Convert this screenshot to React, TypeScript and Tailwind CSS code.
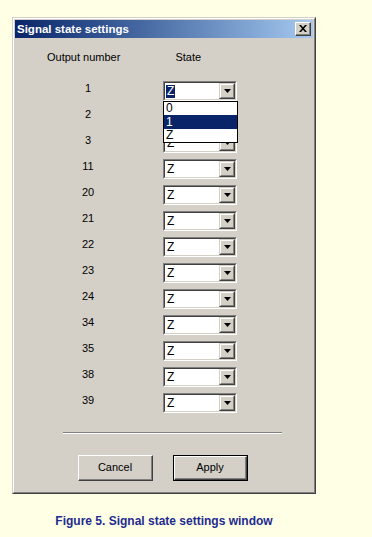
import React from "react";

const rows = ["1", "2", "3", "11", "20", "21", "22", "23", "24", "34", "35", "38", "39"];

function Arrow() {
  return (
    <svg width="7" height="4" viewBox="0 0 7 4">
      <path d="M0 0H7L3.5 4Z" fill="#000" />
    </svg>
  );
}

function Combo({ selected }: { selected?: boolean }) {
  return (
    <div className="w-[74px] h-[20px] border-t border-l border-t-[#808080] border-l-[#808080] border-b border-r border-b-white border-r-white">
      <div className="w-full h-full border-t border-l border-t-[#404040] border-l-[#404040] border-b border-r border-b-[#d4d0c8] border-r-[#d4d0c8] bg-white flex items-stretch">
        <div className="flex-1 flex items-center pl-[1px]">
          <span
            className={
              selected
                ? "bg-[#0a246a] text-white px-[1px] leading-[13px] text-[12px]"
                : "text-black px-[1px] leading-[13px] text-[12px]"
            }
          >
            Z
          </span>
        </div>
        <div className="w-[16px] border-t border-l border-t-[#d4d0c8] border-l-[#d4d0c8] border-b border-r border-b-[#404040] border-r-[#404040]">
          <div className="w-full h-full border-t border-l border-t-white border-l-white border-b border-r border-b-[#808080] border-r-[#808080] bg-[#d4d0c8] flex items-center justify-center">
            <Arrow />
          </div>
        </div>
      </div>
    </div>
  );
}

function Button({ label, isDefault }: { label: string; isDefault?: boolean }) {
  const inner = (
    <div className="w-full h-full border-t border-l border-t-white border-l-white border-b border-r border-b-[#404040] border-r-[#404040]">
      <div className="w-full h-full border-b border-r border-b-[#808080] border-r-[#808080] bg-[#d4d0c8] flex items-center justify-center text-[11px] text-black">
        {label}
      </div>
    </div>
  );
  return (
    <div className={isDefault ? "w-[75px] h-[26px] border border-black" : "w-[75px] h-[26px]"}>
      {inner}
    </div>
  );
}

export default function App() {
  return (
    <div
      className="w-[372px] h-[537px] bg-[#ffffe6] pt-[17px] pl-[12px]"
      style={{ fontFamily: '"Liberation Sans", Arial, sans-serif' }}
    >
      <div className="w-[304px]">
        <div className="w-[304px] h-[477px] border-t border-l border-t-[#d4d0c8] border-l-[#d4d0c8] border-b border-r border-b-[#404040] border-r-[#404040]">
          <div className="w-full h-full border-t border-l border-t-white border-l-white border-b border-r border-b-[#808080] border-r-[#808080] bg-[#d4d0c8] p-[1px] flex flex-col">
            {/* Title bar */}
            <div className="h-[18px] bg-gradient-to-r from-[#0a246a] to-[#a6caf0] flex items-center justify-between pl-[2px] pr-[2px]">
              <span className="text-white font-bold text-[11.5px] leading-[14px]">Signal state settings</span>
              <div className="w-[16px] h-[14px] border-t border-l border-t-white border-l-white border-b border-r border-b-[#404040] border-r-[#404040]">
                <div className="w-full h-full border-b border-r border-b-[#808080] border-r-[#808080] bg-[#d4d0c8] flex items-center justify-center">
                  <svg width="8" height="7" viewBox="0 0 8 7">
                    <path d="M0 0h2l2 2.3L6 0h2L5 3.5 8 7H6L4 4.7 2 7H0l3-3.5Z" fill="#000" />
                  </svg>
                </div>
              </div>
            </div>
            {/* Body */}
            <div className="relative flex-1 text-[11px] text-black">
              <div className="flex pt-[12px] h-[40px] leading-[14px]">
                <span className="ml-[32px]">Output number</span>
                <span className="ml-[55px]">State</span>
              </div>
              <div className="flex flex-col">
                {rows.map((r, i) => (
                  <div key={r} className="flex items-center h-[26px]">
                    <div className="ml-[53px] w-[40px] text-center text-[11px] mb-[5px]">{r}</div>
                    <div className="ml-[55px]">
                      <Combo selected={i === 0} />
                    </div>
                  </div>
                ))}
              </div>
              {/* dropdown list overlay */}
              <div className="absolute left-[148px] top-[63px] w-[75px] border border-black bg-white text-[12px] leading-[13px]">
                <div className="h-[13px] pl-[2px]">0</div>
                <div className="h-[14px] pl-[2px] bg-[#0a246a] text-white leading-[14px]">1</div>
                <div className="h-[13px] pl-[2px]">Z</div>
              </div>
              <div className="ml-[48px] mt-[16px] w-[219px] h-[2px] border-t border-t-[#808080] border-b border-b-white" />
              <div className="flex mt-[21px] ml-[63px] gap-[20px]">
                <Button label="Cancel" />
                <Button label="Apply" isDefault />
              </div>
            </div>
          </div>
        </div>
        <div className="mt-[20px] text-center text-[12px] font-bold text-[#1e2b8f] leading-[14px]">
          Figure 5. Signal state settings window
        </div>
      </div>
    </div>
  );
}
